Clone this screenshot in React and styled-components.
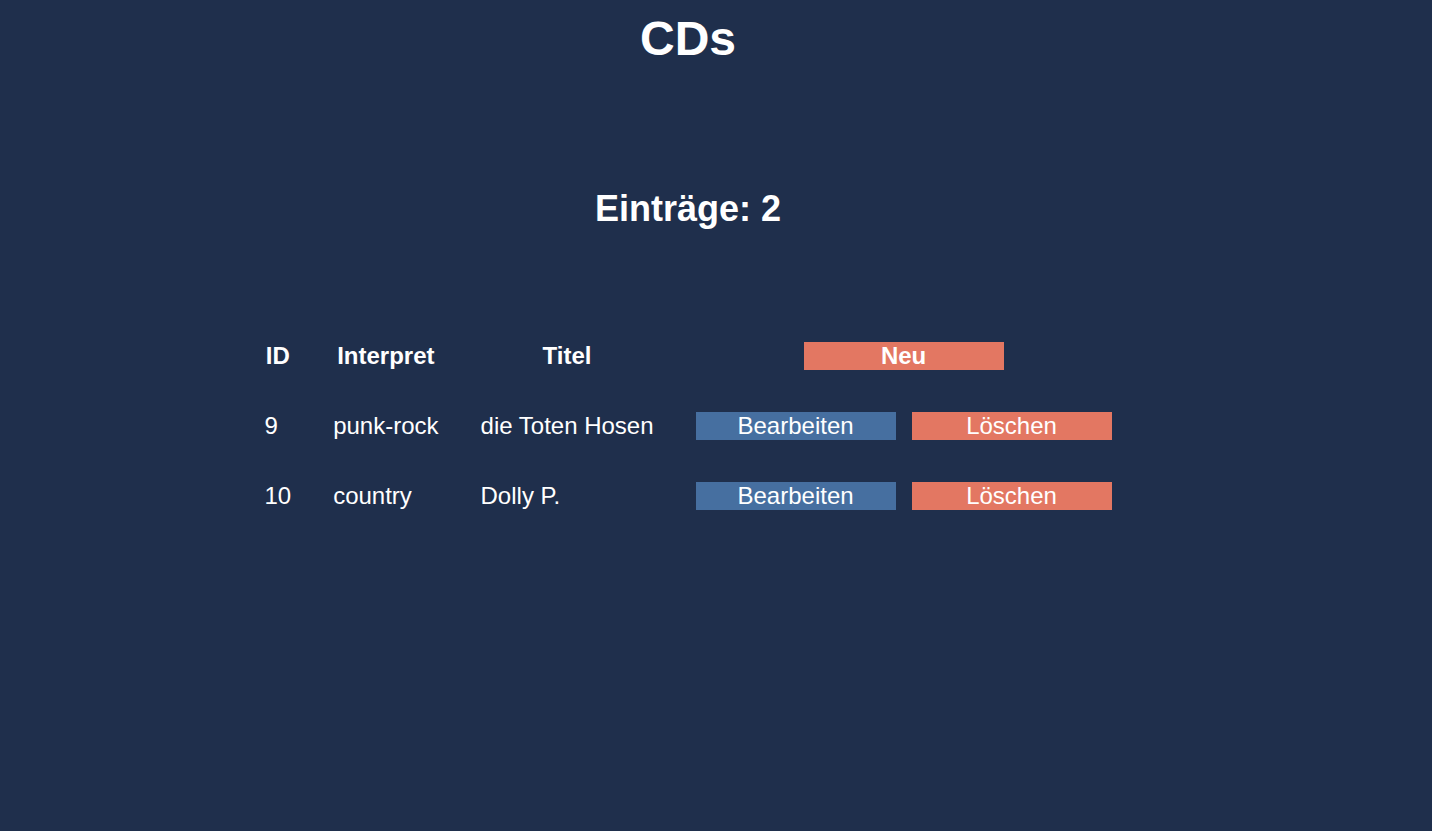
import styled, { createGlobalStyle } from "styled-components";

const cds = [
  { id: 9, interpret: "punk-rock", titel: "die Toten Hosen" },
  { id: 10, interpret: "country", titel: "Dolly P." },
];

export default function App() {
  return (
    <>
      <GlobalStyle />
      <Page>
        <Title>CDs</Title>
        <Count>Einträge: {cds.length}</Count>
        <Table>
          <thead>
            <tr>
              <HeadCell>ID</HeadCell>
              <HeadCell>Interpret</HeadCell>
              <HeadCell>Titel</HeadCell>
              <HeadCell>
                <Button $variant="danger" $bold>
                  Neu
                </Button>
              </HeadCell>
            </tr>
          </thead>
          <tbody>
            {cds.map((cd) => (
              <tr key={cd.id}>
                <Cell>{cd.id}</Cell>
                <Cell>{cd.interpret}</Cell>
                <Cell>{cd.titel}</Cell>
                <Cell>
                  <Actions>
                    <Button $variant="primary">Bearbeiten</Button>
                    <Button $variant="danger">Löschen</Button>
                  </Actions>
                </Cell>
              </tr>
            ))}
          </tbody>
        </Table>
      </Page>
    </>
  );
}

const GlobalStyle = createGlobalStyle`
  html, body {
    margin: 0;
    padding: 0;
    background: #1f2f4c;
  }

  body {
    min-height: 100vh;
    color: #ffffff;
    font-family: "Liberation Sans", Arial, sans-serif;
    font-size: 24px;
  }
`;

const Page = styled.main`
  width: 1376px;
  min-height: 831px;
  display: flex;
  flex-direction: column;
  align-items: center;
`;

const Title = styled.h1`
  margin: 11px 0 0;
  font-size: 48px;
  line-height: 55px;
  font-weight: 700;
`;

const Count = styled.h2`
  margin: 122px 0 0;
  font-size: 36px;
  line-height: 41px;
  font-weight: 700;
`;

const Table = styled.table`
  margin-top: 91px;
  border-collapse: separate;
  border-spacing: 2px;
`;

const HeadCell = styled.th`
  padding: 20px;
  font-weight: 700;
  text-align: center;
  line-height: normal;
`;

const Cell = styled.td`
  padding: 20px;
  text-align: left;
  line-height: normal;
`;

const Actions = styled.div`
  display: flex;
  gap: 16px;
`;

const Button = styled.button`
  width: 200px;
  height: 28px;
  padding: 0;
  border: none;
  border-radius: 0;
  cursor: pointer;
  color: #ffffff;
  background: ${(p) => (p.$variant === "primary" ? "#466fa0" : "#e37762")};
  font-family: "Liberation Sans", Arial, sans-serif;
  font-size: 24px;
  font-weight: ${(p) => (p.$bold ? 700 : 400)};
  line-height: 28px;
  vertical-align: top;
`;
